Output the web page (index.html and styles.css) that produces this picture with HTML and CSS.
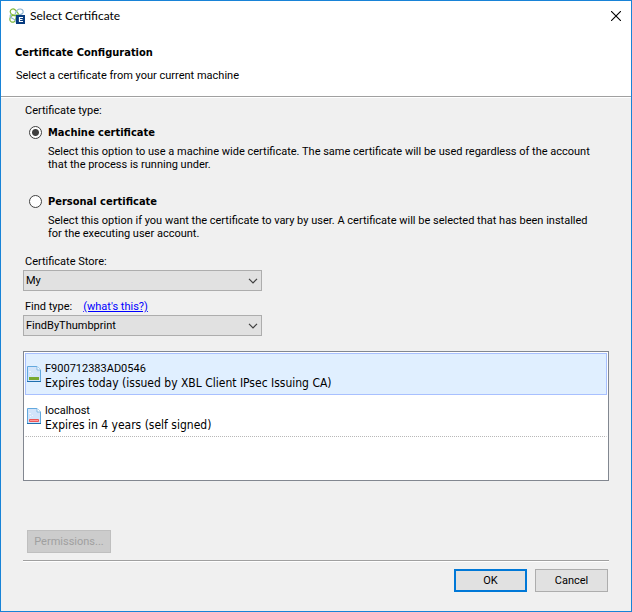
FILE: index.html
```html
<!DOCTYPE html>
<html lang="en">
<head>
<meta charset="utf-8">
<title>Select Certificate</title>
<link rel="stylesheet" href="styles.css">
</head>
<body>
<div class="dialog">
  <header class="titlebar">
    <svg class="app-icon" viewBox="0 0 16 16" aria-hidden="true">
      <g fill="none" stroke-width="1.2">
        <path d="M8.500 6.500C6 9 1.500 6.500 1.200 4 1 1.500 4 0 6 1.800S8.500 5 11 8" stroke="#7fb83a"/>
        <path d="M6 6.500C7 3 9 .8 11.500 1s3.500 3 2 4.500S9 6.500 6.500 9" stroke="#8fb4cf"/>
        <path d="M7 7.500C4 6.500 1 8 .8 11s3 4 4.700 2.500S6 10 8.500 7" stroke="#7fb83a"/>
        <path d="M2 6.500c-2 2 0 3.500 2.500 4.500s3 3 2.500 4" stroke="#8fb4cf"/>
      </g>
      <path d="M7 7h9v9H7z" fill="#083c80"/>
      <path d="M14 9.500h-3.500v4H14M10.500 11.500h3" fill="none" stroke="#fff" stroke-width="1.2"/>
    </svg>
    <h1 class="title">Select Certificate</h1>
    <button class="close" type="button" aria-label="Close">
      <svg class="close-icon" viewBox="0 0 10 10" aria-hidden="true"><path d="M0 0 10 10M10 0 0 10" stroke="#000" stroke-width="1.1"/></svg>
    </button>
  </header>
  <section class="banner">
    <h2 class="heading">Certificate Configuration</h2>
    <p class="intro">Select a certificate from your current machine</p>
  </section>
  <form class="content">
    <p class="caption">Certificate type:</p>
    <div class="option">
      <input class="radio" type="radio" name="type" id="machine" checked>
      <label class="option-name" for="machine">Machine certificate</label>
      <p class="option-text">Select this option to use a machine wide certificate. The same certificate will be used regardless of the account<br>that the process is running under.</p>
    </div>
    <div class="option">
      <input class="radio" type="radio" name="type" id="personal">
      <label class="option-name" for="personal">Personal certificate</label>
      <p class="option-text">Select this option if you want the certificate to vary by user. A certificate will be selected that has been installed<br>for the executing user account.</p>
    </div>
    <div class="field">
      <label class="caption" for="store">Certificate Store:</label>
      <div class="combo">
        <select class="select" id="store"><option>My</option></select>
        <svg class="chevron" viewBox="0 0 10 6" aria-hidden="true"><path d="M1 .8 5 4.800 9 .8" fill="none" stroke="#404040" stroke-width="1.2"/></svg>
      </div>
    </div>
    <div class="field">
      <div class="caption find"><label for="find">Find type:</label><a class="help" href="#">(what's this?)</a></div>
      <div class="combo">
        <select class="select" id="find"><option>FindByThumbprint</option></select>
        <svg class="chevron" viewBox="0 0 10 6" aria-hidden="true"><path d="M1 .8 5 4.800 9 .8" fill="none" stroke="#404040" stroke-width="1.2"/></svg>
      </div>
    </div>
    <ul class="list">
      <li class="item selected">
        <svg class="cert" viewBox="0 0 14 16" aria-hidden="true"><path d="M.5.5h9.500l3.500 3.500v11.500H.5z" fill="#d2e4fa" stroke="#62a8de"/><path d="M10 .5V4h3.500" fill="#fff" stroke="#86bbe5"/><path d="M2 5h2v1H2zM5 7h1v1H5zM3 8h1v1H3z" fill="#eef6ff"/><path d="M0 15h14v1H0z" fill="#1f6fae"/><path d="M2 11h10v3H2z" fill="#78a832"/></svg>
        <div class="item-text"><span class="item-name">F900712383AD0546</span><span class="item-info">Expires today (issued by XBL Client IPsec Issuing CA)</span></div>
      </li>
      <li class="item">
        <svg class="cert" viewBox="0 0 14 16" aria-hidden="true"><path d="M.5.5h9.500l3.500 3.500v11.500H.5z" fill="#d2e4fa" stroke="#62a8de"/><path d="M10 .5V4h3.500" fill="#fff" stroke="#86bbe5"/><path d="M2 5h2v1H2zM5 7h1v1H5zM3 8h1v1H3z" fill="#eef6ff"/><path d="M0 15h14v1H0z" fill="#1f6fae"/><path d="M2.500 11.500h9v2h-9z" fill="#ff9a9a" stroke="#ee5555"/></svg>
        <div class="item-text"><span class="item-name">localhost</span><span class="item-info">Expires in 4 years (self signed)</span></div>
      </li>
    </ul>
    <div class="tools"><button class="button permissions" type="button" disabled>Permissions...</button></div>
    <footer class="actions">
      <button class="button primary" type="submit">OK</button>
      <button class="button" type="button">Cancel</button>
    </footer>
  </form>
</div>
</body>
</html>
```
FILE: styles.css
```css
* { box-sizing: border-box; }
body, h1, h2, p, ul { margin: 0; padding: 0; }
body, button, select {
  font-family: Roboto, "Noto Sans", sans-serif;
  font-size: 11px;
  line-height: 13px;
  color: #000;
}
.dialog {
  display: flex;
  flex-direction: column;
  min-height: 100vh;
  border: 1px solid #1883d7;
  background: #f0f0f0;
}
.titlebar {
  display: flex;
  align-items: center;
  gap: 5px;
  height: 29px;
  padding: 0 10px 0 8px;
  background: #fff;
}
.app-icon { width: 16px; height: 16px; }
.title {
  flex: 1;
  font: 12px/16px Lato, sans-serif;
}
.close {
  display: flex;
  padding: 0;
  border: 0;
  background: none;
}
.close-icon { width: 10px; height: 10px; }
.banner {
  padding: 16px 14px 14px;
  background: #fff;
  border-bottom: 1px solid #a0a0a0;
}
.heading, .option-name {
  font-family: "DejaVu Sans Condensed", sans-serif;
  font-size: 11px;
  font-weight: bold;
}
.heading { line-height: 13px; margin-bottom: 10px; }
.intro { padding-left: 1px; }
.content {
  display: flex;
  flex: 1;
  flex-direction: column;
  padding: 6px 22px 19px;
  border-top: 1px solid #fff;
}
.caption { display: block; padding-left: 2px; margin-bottom: 3px; }
.option {
  display: grid;
  grid-template-columns: 13px 1fr;
  column-gap: 6px;
  align-items: center;
  height: 69px;
  padding: 6px 0 0 6px;
  align-content: start;
  row-gap: 6px;
}
.option + .option { height: 66px; }
.radio {
  appearance: none;
  width: 13px;
  height: 13px;
  margin: 0;
  border: 1px solid #404040;
  border-radius: 50%;
  background: #fff;
}
.radio:checked { background: radial-gradient(circle, #404040 3px, #fff 4px); }
.option-text { grid-column: 2; white-space: nowrap; }
.field .caption { margin-bottom: 2px; }
.field + .field { margin-top: 9px; }
.combo { position: relative; width: 239px; }
.select {
  appearance: none;
  display: block;
  width: 100%;
  height: 21px;
  padding: 0 20px 0 2px;
  border: 1px solid #adadad;
  border-radius: 0;
  background: #e1e1e1;
}
.chevron {
  position: absolute;
  right: 4px;
  top: 8px;
  width: 10px;
  height: 6px;
  pointer-events: none;
}
.find { display: flex; gap: 11px; }
.help { color: #0000ff; }
.list {
  height: 130px;
  margin-top: 15px;
  padding: 1px;
  border: 1px solid #828790;
  background: #fff;
  list-style: none;
}
.item {
  display: flex;
  align-items: center;
  gap: 4px;
  height: 42px;
  padding: 0 1px;
  border: 1px solid transparent;
  border-bottom: 1px dotted #b8b8b8;
}
.item.selected { border: 1px solid #a8c0ff; background: #e0efff; }
.cert { width: 14px; height: 16px; }
.item-text { display: flex; flex-direction: column; padding-top: 5px; }
.item-name { line-height: 14px; }
.item-info { font: 12px/15px "DejaVu Sans Condensed", sans-serif; }
.button {
  width: 73px;
  height: 23px;
  padding: 0;
  border: 1px solid #adadad;
  background: #e1e1e1;
}
.primary { border: 2px solid #0078d7; }
.tools { margin-top: auto; padding: 0 4px 7px; }
.permissions {
  display: block;
  width: 84px;
  border-color: #bfbfbf;
  background: #ccc;
  color: #a0a0a0;
}
.actions {
  display: flex;
  justify-content: flex-end;
  gap: 8px;
  padding: 8px 1px 0 0;
  border-top: 1px solid #a0a0a0;
  box-shadow: inset 0 1px #fff;
}
```
